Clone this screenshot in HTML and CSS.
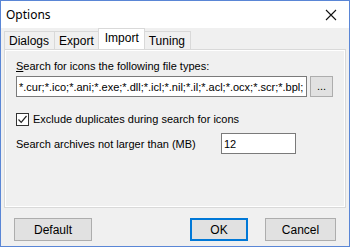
FILE: index.html
```html
<!DOCTYPE html>
<html>
<head>
<meta charset="utf-8">
<link rel="stylesheet" href="styles.css">
</head>
<body>
<div class="window">
  <div class="titlebar">
    <span class="title">Options</span>
    <svg class="close" width="12" height="12" viewBox="0 0 12 12"><path d="M1 1 L11 11 M11 1 L1 11" stroke="#111" stroke-width="1.1" fill="none"/></svg>
  </div>
  <div class="content">
    <div class="tabs">
      <div class="tab">Dialogs</div>
      <div class="tab">Export</div>
      <div class="tab active">Import</div>
      <div class="tab">Tuning</div>
    </div>
    <div class="panel">
      <div class="label"><u>S</u>earch for icons the following file types:</div>
      <div class="row">
        <div class="edit wide">*.cur;*.ico;*.ani;*.exe;*.dll;*.icl;*.nil;*.il;*.acl;*.ocx;*.scr;*.bpl;</div>
        <div class="btn small">...</div>
      </div>
      <div class="check-row">
        <span class="checkbox"><svg width="11" height="11" viewBox="0 0 11 11"><path d="M1.5 5.5 L4.2 8.3 L9.5 2" stroke="#222" stroke-width="1.2" fill="none"/></svg></span>
        <span>Exclude duplicates during search for icons</span>
      </div>
      <div class="size-row">
        <span class="size-label">Search archives not larger than (MB)</span>
        <div class="edit num">12</div>
      </div>
    </div>
    <div class="buttons">
      <div class="btn push">Default</div>
      <div class="spacer"></div>
      <div class="btn push ok">OK</div>
      <div class="btn push cancel">Cancel</div>
    </div>
  </div>
</div>
</body>
</html>
```
FILE: styles.css
```css
html, body { margin: 0; padding: 0; }
body { font-family: "Liberation Sans", Arial, sans-serif; font-size: 11px; color: #000; }
.window {
  width: 350px; height: 247px; box-sizing: border-box;
  border: 1px solid #5a86d6; background: #f0f0f0;
  display: flex; flex-direction: column;
}
.titlebar {
  height: 27px; background: #fff; display: flex; align-items: center;
  padding: 0 0 0 5px; justify-content: space-between;
}
.title { font-family: "Noto Sans", "Liberation Sans", sans-serif; font-size: 12px; color: #000; }
.close { margin-right: 12px; }
.content { flex: 1; display: flex; flex-direction: column; padding: 0 3px 0 3px; }
.tabs { display: flex; height: 21px; align-items: flex-end; }
.tab {
  height: 18px; box-sizing: border-box; border: 1px solid #d9d9d9; border-bottom: none;
  padding: 0 5px 0 4px; display: flex; align-items: center; background: #f0f0f0; margin-right: -1px;
  font-size: 12px;
}
.tab.active { height: 21px; background: #fff; position: relative; z-index: 1; margin: 0 -1px 0 -1px; padding: 0 5px 2px 6px; border-color: #d9d9d9; }
.panel {
  height: 159px; box-sizing: border-box; border: 1px solid #d9d9d9;
  box-shadow: inset 1px 1px 0 #fff, inset -1px -1px 0 #fff;
  padding: 9px 12px 0 11px; display: flex; flex-direction: column;
}
.label { height: 14px; line-height: 14px; }
.row { display: flex; margin-top: 3px; gap: 3px; }
.edit {
  height: 21px; box-sizing: border-box; border: 1px solid #7a7a7a; background: #fff;
  padding: 0 2px; display: flex; align-items: center; white-space: nowrap; overflow: hidden;
}
.wide { width: 292px; }
.btn {
  box-sizing: border-box; border: 1px solid #adadad; background: #e1e1e1;
  display: flex; align-items: center; justify-content: center;
}
.small { width: 23px; height: 21px; padding-bottom: 2px; }
.check-row { display: flex; align-items: center; margin-top: 15px; gap: 4px; height: 14px; }
.checkbox {
  width: 13px; height: 13px; box-sizing: border-box; border: 1px solid #333; background: #fff;
  display: flex; align-items: center; justify-content: center;
}
.size-row { display: flex; align-items: center; margin-top: 7px; }
.size-label { width: 205px; }
.num { width: 75px; }
.buttons { display: flex; padding: 10px 10px 0 10px; }
.push { height: 23px; width: 78px; font-size: 12px; }
.spacer { flex: 1; }
.ok { width: 58px; border: 2px solid #0078d7; margin-right: 17px; }
.cancel { width: 71px; }
```
